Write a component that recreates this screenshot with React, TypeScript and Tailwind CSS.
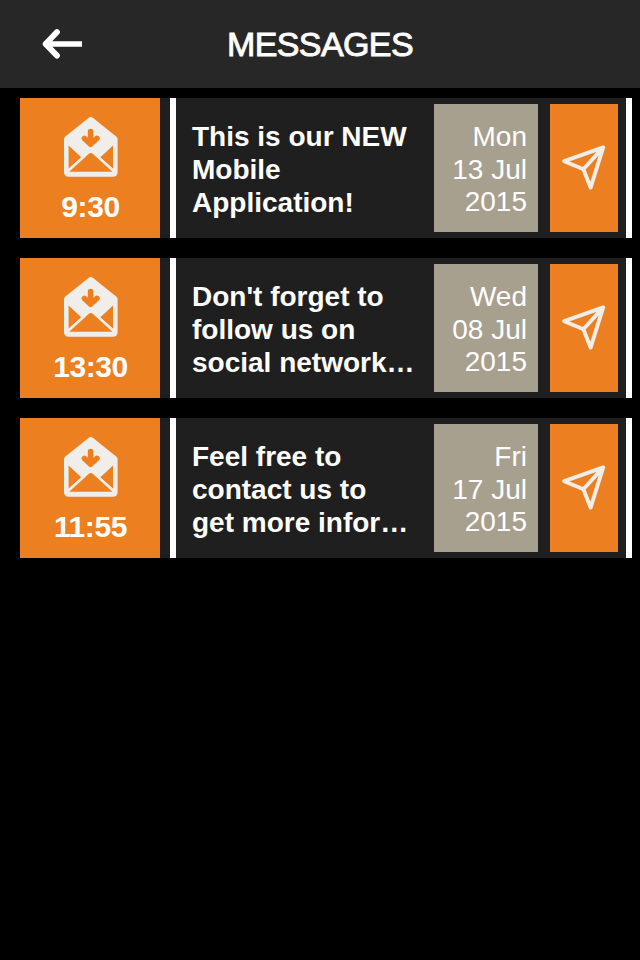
interface Message {
  id: number;
  time: string;
  text: string[];
  date: string[];
}

const messages: Message[] = [
  {
    id: 1,
    time: '9:30',
    text: ['This is our NEW', 'Mobile', 'Application!'],
    date: ['Mon', '13 Jul', '2015'],
  },
  {
    id: 2,
    time: '13:30',
    text: ["Don't forget to", 'follow us on', 'social network…'],
    date: ['Wed', '08 Jul', '2015'],
  },
  {
    id: 3,
    time: '11:55',
    text: ['Feel free to', 'contact us to', 'get more infor…'],
    date: ['Fri', '17 Jul', '2015'],
  },
];

function BackArrow() {
  return (
    <svg width="42" height="32" viewBox="0 0 42 32" fill="none" stroke="#fff">
      <path d="M16 4 4.6 16 16 27.6" strokeWidth="5.8" strokeLinecap="round" strokeLinejoin="round" />
      <path d="M2 16 9 10V22Z" fill="#fff" stroke="none" />
      <path d="M3 16h38" strokeWidth="5.4" />
    </svg>
  );
}

function InboxIcon() {
  return (
    <svg className="ml-[2px]" width="54" height="60" viewBox="0 0 54 60">
      <path
        d="M24.8 .8Q26.8-.6 28.8 .8L52.2 19.6Q53.6 20.8 53.6 22.6V55Q53.6 59.8 48.8 59.8H4.8Q0 59.8 0 55V22.6Q0 20.8 1.4 19.6Z"
        fill="#f0eeea"
      />
      <path d="M4.6 28.4 17.2 40.2 4.6 51.4ZM49 28.4 36.4 40.2 49 51.4ZM5.2 54.8 24.9 36.8Q26.8 35 28.7 36.8L48.4 54.8Z" fill="#ec7f20" />
      <path
        d="M26.6 14.6V26.6M20.4 21.4 26.6 27.2 32.9 21.4"
        fill="none"
        stroke="#ec7f20"
        strokeWidth="5.6"
        strokeLinecap="round"
        strokeLinejoin="round"
      />
    </svg>
  );
}

function SendIcon() {
  return (
    <svg width="44" height="46" viewBox="0 0 44 46" fill="none" stroke="#f0eeea" strokeWidth="3.9" strokeLinejoin="round">
      <path d="M41.2 2.4 2.2 16.2 21.4 24.2 28.6 42.6ZM41.2 2.4 21.4 24.2" />
    </svg>
  );
}

function MessageRow({ message }: { message: Message }) {
  return (
    <li className="flex h-[140px] w-[612px] bg-[#1f1f1f]">
      <div className="flex w-[140px] flex-col items-center bg-[#ec7f20] pt-[19px]">
        <InboxIcon />
        <span className="mt-[13px] ml-px text-[30px] leading-[34px] font-bold tracking-[-0.4px]">{message.time}</span>
      </div>

      {/* Body sits between two white rules */}
      <div className="ml-[10px] flex w-[462px] border-x-[6px] border-white">
        <div className="w-[258px] pt-[22px] pl-4 text-[28px] leading-[33px] font-bold">
          {message.text.map((line) => (
            <p key={line} className="whitespace-nowrap">{line}</p>
          ))}
        </div>
        <div className="my-[6px] w-[104px] bg-[#a8a08e] pt-[17px] pr-[11px] text-right text-[28px] leading-[32.5px]">
          {message.date.map((line) => (
            <p key={line} className="whitespace-nowrap">{line}</p>
          ))}
        </div>
        <button className="my-[6px] ml-3 flex w-[68px] items-center justify-center bg-[#ec7f20]">
          <SendIcon />
        </button>
      </div>
    </li>
  );
}

export default function App() {
  return (
    <div className="min-h-screen w-[640px] bg-black font-['Liberation_Sans',Arial,sans-serif] text-white">
      <header className="grid h-[88px] grid-cols-[220px_200px_220px] items-center bg-[#272727]">
        <button className="pl-[41px]">
          <BackArrow />
        </button>
        <h1 className="text-center text-[34px] leading-none tracking-[-0.6px] whitespace-nowrap [-webkit-text-stroke:0.9px_white]">
          MESSAGES
        </h1>
      </header>

      <ul className="flex flex-col gap-5 pt-[10px] pl-5">
        {messages.map((message) => (
          <MessageRow key={message.id} message={message} />
        ))}
      </ul>
    </div>
  );
}
